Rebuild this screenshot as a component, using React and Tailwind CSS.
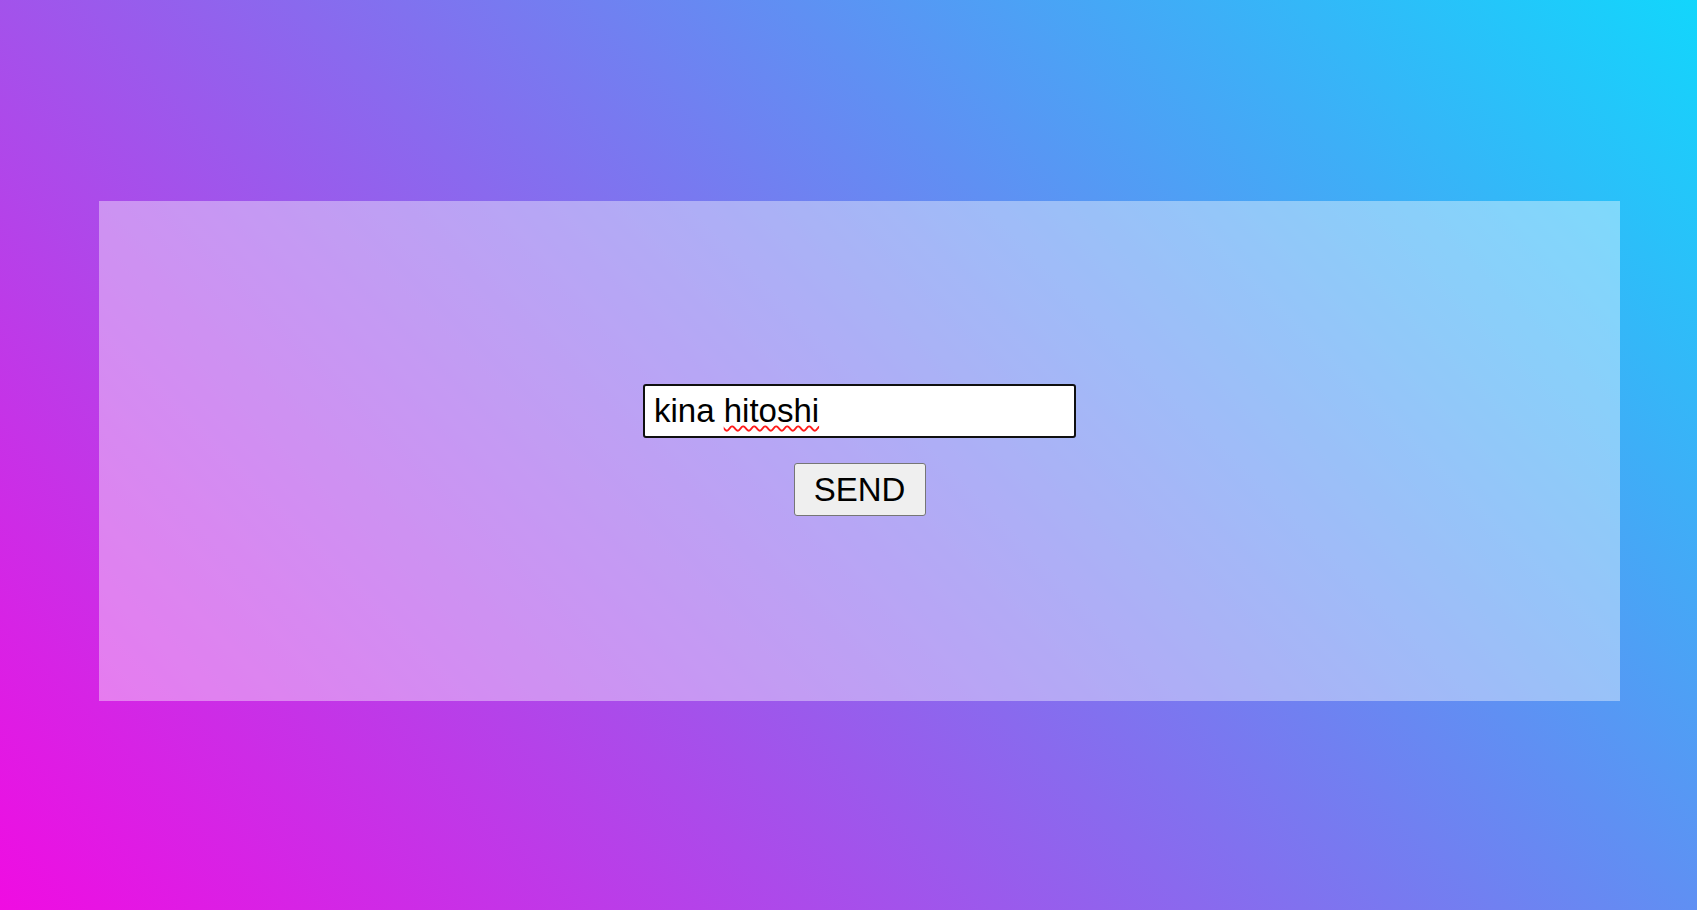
import React, { useState } from 'react';

export default function App() {
  const [name, setName] = useState('kina hitoshi');

  return (
    <div className="w-full h-[910px] bg-[linear-gradient(45deg,#f00ce2,#12d6fc)] pt-[201px] pl-[99px] font-['Liberation_Sans',Arial,sans-serif] overflow-hidden">
      {/* glass panel */}
      <div className="w-[1521px] h-[500px] bg-white/40 flex flex-col items-center justify-center gap-[25px] pb-[2px]">
        <div className="relative">
          <input
            className="w-[433px] h-[54px] bg-white border-2 border-[#101010] rounded-[3px] pl-[9px] pr-2 text-[33px] text-black outline-none font-['Liberation_Sans',Arial,sans-serif]"
            value={name}
            onChange={e => setName(e.target.value)}
            spellCheck={false}
          />
          {/* spell-check squiggle */}
          <div className="absolute inset-0 pointer-events-none flex items-center pl-[11px] text-[33px] text-transparent whitespace-pre">
            <span>kina </span>
            <span className="underline decoration-wavy decoration-[#ff1a1a] decoration-2 underline-offset-[3px]">hitoshi</span>
          </div>
        </div>
        <button className="w-[132px] h-[53px] bg-[#efefef] border border-[#767676] rounded-[3px] text-[33px] text-black leading-none font-['Liberation_Sans',Arial,sans-serif]">
          SEND
        </button>
      </div>
    </div>
  );
}
